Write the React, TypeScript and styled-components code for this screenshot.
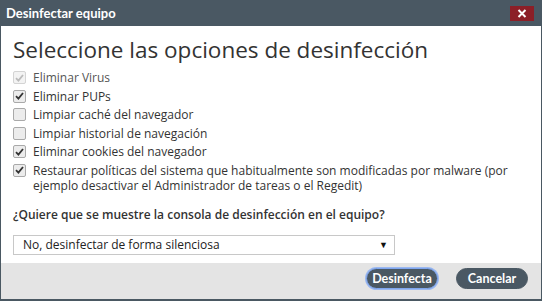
import styled, { createGlobalStyle } from "styled-components";

const Global = createGlobalStyle`
  html, body { margin: 0; padding: 0; background: #ffffff; }
  body { font-family: "Open Sans", "Lato", sans-serif; }
`;

const Dialog = styled.div`
  width: 542px;
  height: 301px;
  box-sizing: border-box;
  display: flex;
  flex-direction: column;
  border: 1px solid #4a5862;
  border-top: none;
  border-bottom-width: 2px;
  background: #fff;
`;

const TitleBar = styled.div`
  height: 26px;
  flex: none;
  background: #4a5863;
  display: flex;
  align-items: center;
  justify-content: space-between;
  padding: 0 7px 0 5px;
  color: #fff;
  font-family: "Lato", sans-serif;
  font-weight: 700;
  font-size: 13px;
`;

const CloseButton = styled.div`
  width: 24px;
  height: 15px;
  background: #8c1f27;
  display: flex;
  align-items: center;
  justify-content: center;
  margin-top: 1px;
`;

const Body = styled.div`
  flex: 1;
  padding: 11px 12px 0 12px;
  color: #333;
`;

const Heading = styled.h2`
  margin: 0 0 7px 0;
  font-weight: 400;
  font-size: 22.5px;
  line-height: 26px;
  color: #333;
`;

const OptionList = styled.div`
  display: flex;
  flex-direction: column;
  gap: 3.6px;
`;

const Option = styled.label<{ $disabled?: boolean }>`
  display: flex;
  align-items: flex-start;
  gap: 7px;
  font-size: 12px;
  line-height: 15px;
  color: ${(p) => (p.$disabled ? "#555" : "#333")};
  > span {
    max-width: 485px;
  }
`;

const Box = styled.span<{ $disabled?: boolean }>`
  flex: none;
  width: 11px;
  height: 11px;
  margin-top: 1px;
  border: 1px solid ${(p) => (p.$disabled ? "#d4d4d4" : "#a9a9a9")};
  border-radius: 2px;
  background: ${(p) => (p.$disabled ? "#f3f3f3" : "#ececec")};
  display: flex;
  align-items: center;
  justify-content: center;
`;

const Question = styled.div`
  margin-top: 14px;
  font-size: 12px;
  line-height: 15px;
  font-weight: 600;
  color: #333;
`;

const Select = styled.div`
  margin-top: 13px;
  width: 382px;
  height: 20px;
  box-sizing: border-box;
  border: 1px solid #c8c8c8;
  display: flex;
  align-items: center;
  justify-content: space-between;
  padding: 0 6px 0 9px;
  font-size: 12px;
  color: #222;
`;

const Arrow = styled.span`
  font-size: 9px;
  color: #111;
`;

const Footer = styled.div`
  height: 31px;
  flex: none;
  background: #e4e4e4;
  display: flex;
  align-items: flex-start;
  justify-content: flex-end;
  gap: 18px;
  padding: 5px 13px 0 0;
`;

const Button = styled.button<{ $focused?: boolean }>`
  height: 21px;
  padding: 0 ${(p) => (p.$focused ? "1px" : "9px")};
  border-radius: 11px;
  background: #4a5863;
  color: #fff;
  border: ${(p) => (p.$focused ? "1px solid #7fa6ee" : "1px solid #4a5863")};
  box-shadow: ${(p) => (p.$focused ? "0 0 0 1px #9bb8f0" : "none")};
  font-family: "Lato", sans-serif;
  font-weight: 700;
  font-size: 12.5px;
  min-width: 72px;
`;

const options = [
  { label: "Eliminar Virus", checked: true, disabled: true },
  { label: "Eliminar PUPs", checked: true },
  { label: "Limpiar caché del navegador", checked: false },
  { label: "Limpiar historial de navegación", checked: false },
  { label: "Eliminar cookies del navegador", checked: true },
  {
    label:
      "Restaurar políticas del sistema que habitualmente son modificadas por malware (por ejemplo desactivar el Administrador de tareas o el Regedit)",
    checked: true,
  },
];

function Check({ color }: { color: string }) {
  return (
    <svg width="9" height="8" viewBox="0 0 9 8">
      <path d="M1 4.2 L3.4 6.6 L8 1" fill="none" stroke={color} strokeWidth="1.8" />
    </svg>
  );
}

export default function App() {
  return (
    <>
      <Global />
      <Dialog>
        <TitleBar>
          <span>Desinfectar equipo</span>
          <CloseButton>
            <svg width="10" height="9" viewBox="0 0 10 9">
              <path d="M1.5 1 L8.5 8 M8.5 1 L1.5 8" stroke="#fff" strokeWidth="2" />
            </svg>
          </CloseButton>
        </TitleBar>
        <Body>
          <Heading>Seleccione las opciones de desinfección</Heading>
          <OptionList>
            {options.map((o) => (
              <Option key={o.label} $disabled={o.disabled}>
                <Box $disabled={o.disabled}>
                  {o.checked && <Check color={o.disabled ? "#bbb" : "#333"} />}
                </Box>
                <span>{o.label}</span>
              </Option>
            ))}
          </OptionList>
          <Question>¿Quiere que se muestre la consola de desinfección en el equipo?</Question>
          <Select>
            <span>No, desinfectar de forma silenciosa</span>
            <Arrow>▼</Arrow>
          </Select>
        </Body>
        <Footer>
          <Button $focused>Desinfecta</Button>
          <Button>Cancelar</Button>
        </Footer>
      </Dialog>
    </>
  );
}
